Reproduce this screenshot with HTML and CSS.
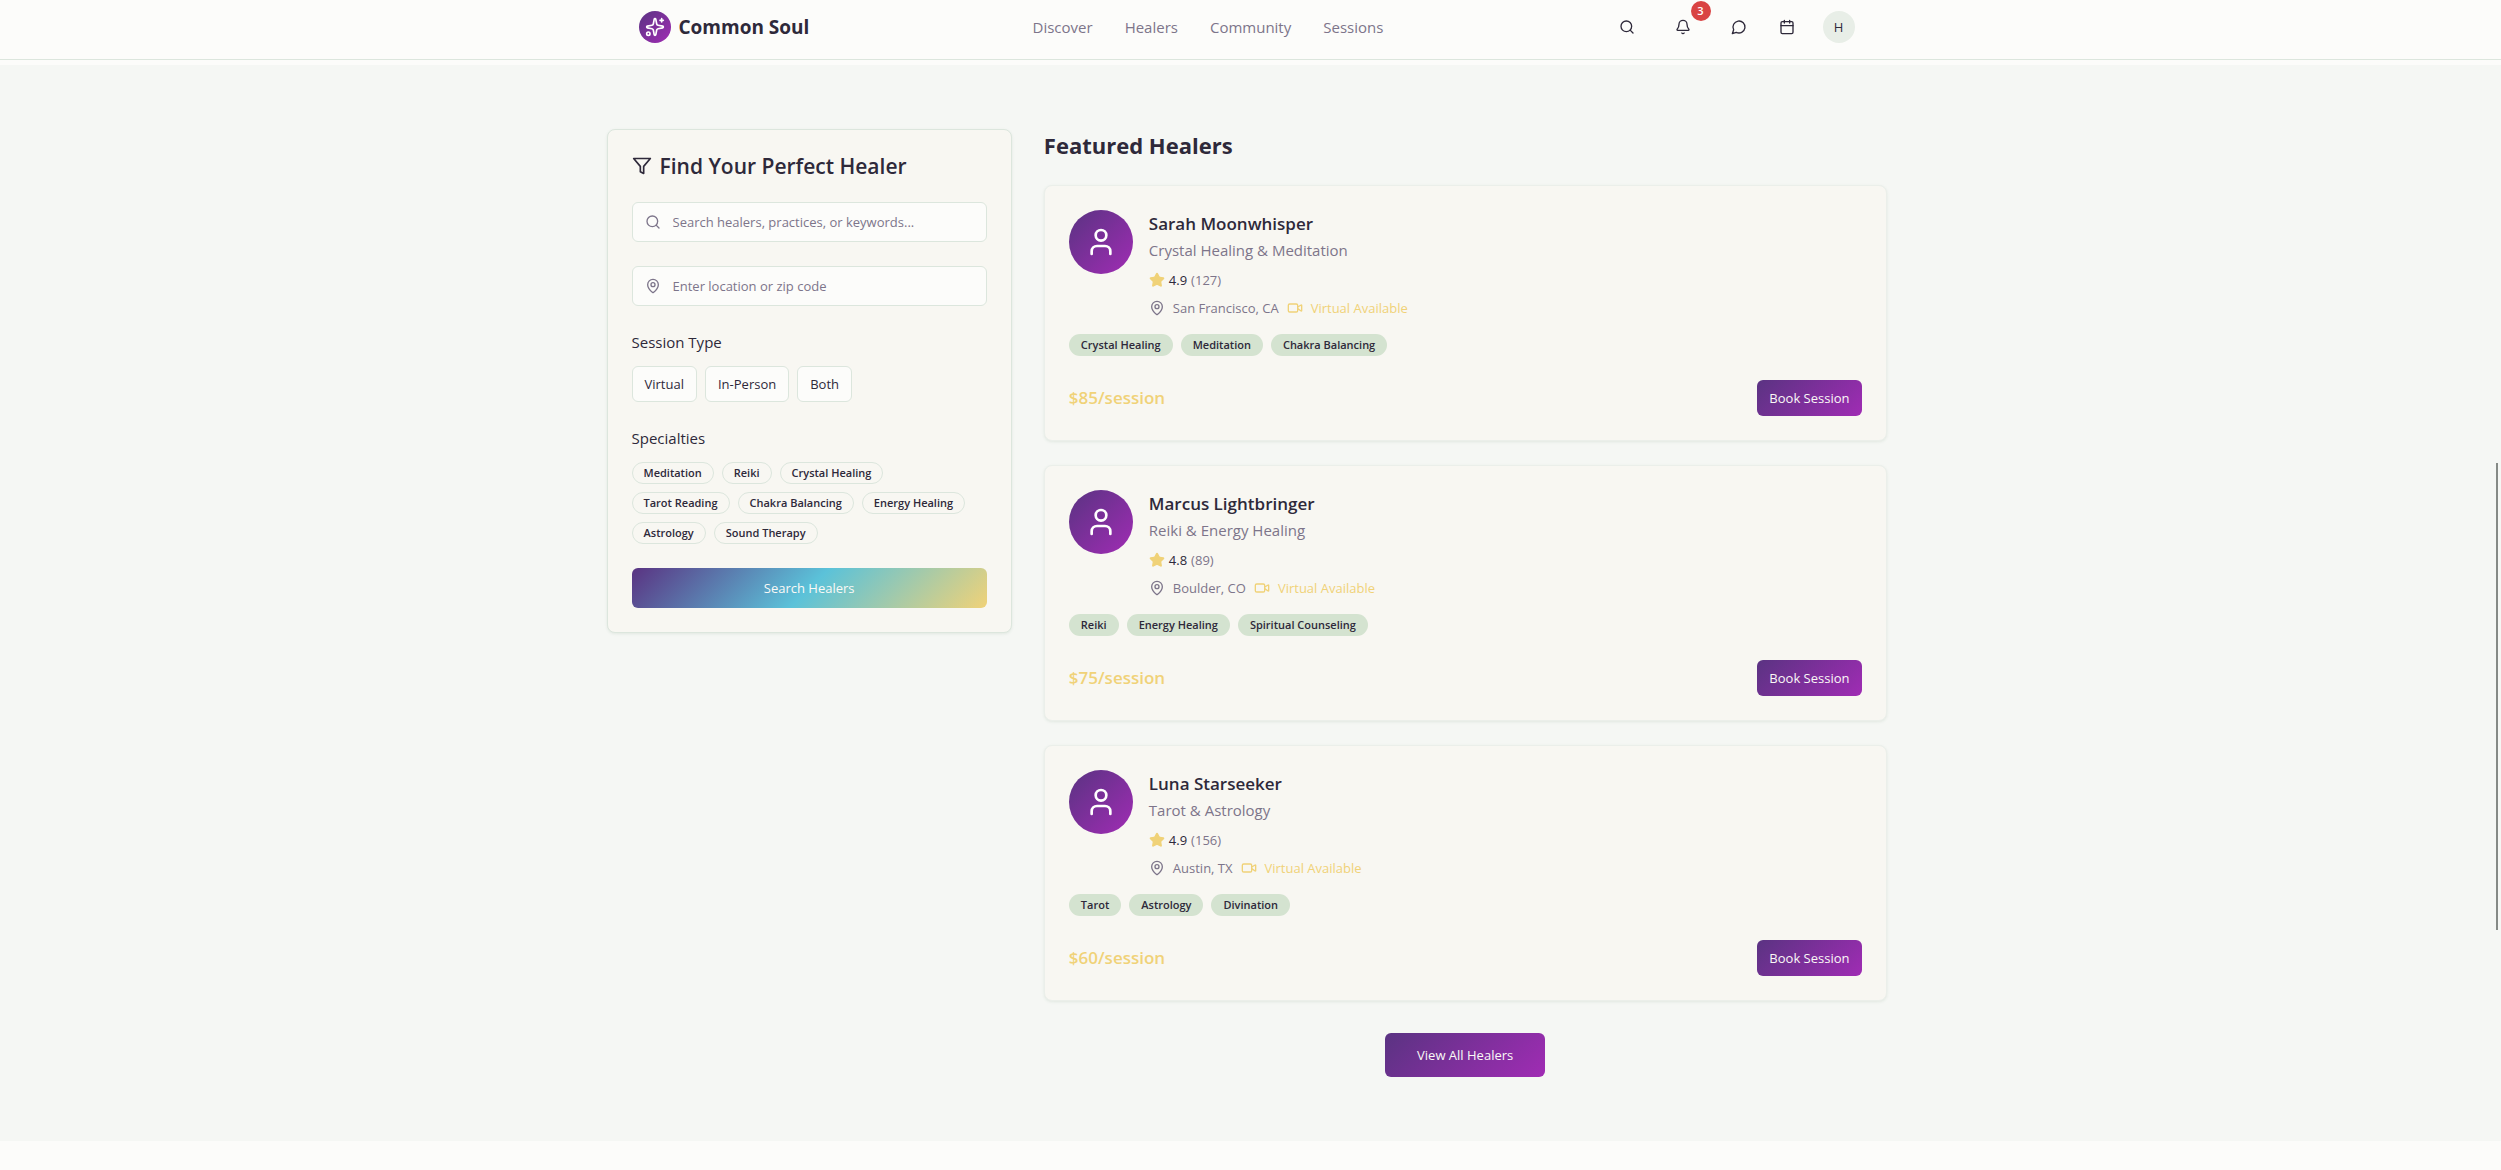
FILE: index.html
```html
<!DOCTYPE html>
<html lang="en">
<head>
<meta charset="utf-8">
<meta name="viewport" content="width=device-width, initial-scale=1">
<title>Common Soul</title>
<link rel="stylesheet" href="styles.css">
</head>
<body>
<svg class="sprite" aria-hidden="true">
  <symbol id="search" viewBox="0 0 24 24"><circle cx="11" cy="11" r="8"/><path d="m21 21-4.3-4.3"/></symbol>
  <symbol id="bell" viewBox="0 0 24 24"><path d="M10.268 21a2 2 0 0 0 3.464 0"/><path d="M3.262 15.326A1 1 0 0 0 4 17h16a1 1 0 0 0 .74-1.673C19.41 13.956 18 12.499 18 8A6 6 0 0 0 6 8c0 4.499-1.411 5.956-2.738 7.326"/></symbol>
  <symbol id="chat" viewBox="0 0 24 24"><path d="M7.9 20A9 9 0 1 0 4 16.1L2 22Z"/></symbol>
  <symbol id="calendar" viewBox="0 0 24 24"><path d="M8 2v4M16 2v4M3 10h18"/><rect x="3" y="4" width="18" height="18" rx="2"/></symbol>
  <symbol id="filter" viewBox="0 0 24 24"><path d="M22 3H2l8 9.46V19l4 2v-8.54L22 3z"/></symbol>
  <symbol id="pin" viewBox="0 0 24 24"><path d="M20 10c0 4.993-5.539 10.193-7.399 11.799a1 1 0 0 1-1.202 0C9.539 20.193 4 14.993 4 10a8 8 0 0 1 16 0"/><circle cx="12" cy="10" r="3"/></symbol>
  <symbol id="video" viewBox="0 0 24 24"><path d="m16 13 5.223 3.482a.5.5 0 0 0 .777-.416V7.87a.5.5 0 0 0-.752-.432L16 10.5"/><rect x="2" y="6" width="14" height="12" rx="2"/></symbol>
  <symbol id="user" viewBox="0 0 24 24"><path d="M19 21v-2a4 4 0 0 0-4-4H9a4 4 0 0 0-4 4v2"/><circle cx="12" cy="7" r="4"/></symbol>
  <symbol id="star" viewBox="0 0 24 24"><path d="M11.525 2.295a.53.53 0 0 1 .95 0l2.31 4.679a2.123 2.123 0 0 0 1.595 1.16l5.166.756a.53.53 0 0 1 .294.904l-3.736 3.638a2.123 2.123 0 0 0-.611 1.878l.882 5.14a.53.53 0 0 1-.771.56l-4.618-2.428a2.122 2.122 0 0 0-1.973 0L6.396 21.01a.53.53 0 0 1-.77-.56l.881-5.139a2.122 2.122 0 0 0-.611-1.879L2.16 9.795a.53.53 0 0 1 .294-.906l5.165-.755a2.122 2.122 0 0 0 1.597-1.16z"/></symbol>
  <symbol id="sparkles" viewBox="0 0 24 24"><path d="M11.017 2.814a1 1 0 0 1 1.966 0l1.051 5.558a2 2 0 0 0 1.594 1.594l5.558 1.051a1 1 0 0 1 0 1.966l-5.558 1.051a2 2 0 0 0-1.594 1.594l-1.051 5.558a1 1 0 0 1-1.966 0l-1.051-5.558a2 2 0 0 0-1.594-1.594l-5.558-1.051a1 1 0 0 1 0-1.966l5.558-1.051a2 2 0 0 0 1.594-1.594z"/><path d="M20 2v4M22 4h-4"/><circle cx="4" cy="20" r="2"/></symbol>
</svg>

<header class="site-header">
  <div class="header-inner">
    <a class="brand" href="#"><span class="brand-mark"><svg class="icon icon-mark"><use href="#sparkles"/></svg></span>Common Soul</a>
    <nav class="nav" aria-label="Main">
      <a href="#">Discover</a><a href="#">Healers</a><a href="#">Community</a><a href="#">Sessions</a>
    </nav>
    <div class="actions">
      <button class="icon-button" aria-label="Search"><svg class="icon"><use href="#search"/></svg></button>
      <button class="icon-button" aria-label="Notifications"><svg class="icon"><use href="#bell"/></svg><span class="count">3</span></button>
      <div class="action-pair">
        <button class="icon-button" aria-label="Messages"><svg class="icon"><use href="#chat"/></svg></button>
        <button class="icon-button" aria-label="Calendar"><svg class="icon"><use href="#calendar"/></svg></button>
      </div>
      <button class="profile" aria-label="Account">H</button>
    </div>
  </div>
</header>

<main class="discover">
  <div class="layout">
    <form class="panel filters">
      <h2 class="filters-title"><svg class="icon icon-filter"><use href="#filter"/></svg>Find Your Perfect Healer</h2>
      <div class="field">
        <svg class="icon"><use href="#search"/></svg>
        <input type="text" aria-label="Search healers" placeholder="Search healers, practices, or keywords...">
      </div>
      <div class="field">
        <svg class="icon"><use href="#pin"/></svg>
        <input type="text" aria-label="Location" placeholder="Enter location or zip code">
      </div>
      <section class="group">
        <h3>Session Type</h3>
        <div class="choices">
          <button type="button" class="choice">Virtual</button>
          <button type="button" class="choice">In-Person</button>
          <button type="button" class="choice">Both</button>
        </div>
      </section>
      <section class="group">
        <h3>Specialties</h3>
        <div class="choices">
          <button type="button" class="tag outline">Meditation</button>
          <button type="button" class="tag outline">Reiki</button>
          <button type="button" class="tag outline">Crystal Healing</button>
          <button type="button" class="tag outline">Tarot Reading</button>
          <button type="button" class="tag outline">Chakra Balancing</button>
          <button type="button" class="tag outline">Energy Healing</button>
          <button type="button" class="tag outline">Astrology</button>
          <button type="button" class="tag outline">Sound Therapy</button>
        </div>
      </section>
      <button type="button" class="button aurora">Search Healers</button>
    </form>

    <section class="featured">
      <h2 class="featured-title">Featured Healers</h2>
      <div class="healers">
        <article class="panel healer">
          <div class="profile-row">
            <span class="avatar"><svg class="icon icon-user"><use href="#user"/></svg></span>
            <div class="details">
              <h3>Sarah Moonwhisper</h3>
              <p class="practice">Crystal Healing &amp; Meditation</p>
              <p class="rating"><svg class="icon star"><use href="#star"/></svg><b>4.9</b><span>(127)</span></p>
              <p class="place"><svg class="icon"><use href="#pin"/></svg><span>San Francisco, CA</span><svg class="icon gold"><use href="#video"/></svg><span class="gold">Virtual Available</span></p>
            </div>
          </div>
          <div class="tags"><span class="tag">Crystal Healing</span><span class="tag">Meditation</span><span class="tag">Chakra Balancing</span></div>
          <div class="booking"><span class="price">$85/session</span><button class="button">Book Session</button></div>
        </article>
        <article class="panel healer">
          <div class="profile-row">
            <span class="avatar"><svg class="icon icon-user"><use href="#user"/></svg></span>
            <div class="details">
              <h3>Marcus Lightbringer</h3>
              <p class="practice">Reiki &amp; Energy Healing</p>
              <p class="rating"><svg class="icon star"><use href="#star"/></svg><b>4.8</b><span>(89)</span></p>
              <p class="place"><svg class="icon"><use href="#pin"/></svg><span>Boulder, CO</span><svg class="icon gold"><use href="#video"/></svg><span class="gold">Virtual Available</span></p>
            </div>
          </div>
          <div class="tags"><span class="tag">Reiki</span><span class="tag">Energy Healing</span><span class="tag">Spiritual Counseling</span></div>
          <div class="booking"><span class="price">$75/session</span><button class="button">Book Session</button></div>
        </article>
        <article class="panel healer">
          <div class="profile-row">
            <span class="avatar"><svg class="icon icon-user"><use href="#user"/></svg></span>
            <div class="details">
              <h3>Luna Starseeker</h3>
              <p class="practice">Tarot &amp; Astrology</p>
              <p class="rating"><svg class="icon star"><use href="#star"/></svg><b>4.9</b><span>(156)</span></p>
              <p class="place"><svg class="icon"><use href="#pin"/></svg><span>Austin, TX</span><svg class="icon gold"><use href="#video"/></svg><span class="gold">Virtual Available</span></p>
            </div>
          </div>
          <div class="tags"><span class="tag">Tarot</span><span class="tag">Astrology</span><span class="tag">Divination</span></div>
          <div class="booking"><span class="price">$60/session</span><button class="button">Book Session</button></div>
        </article>
      </div>
      <button class="button large">View All Healers</button>
    </section>
  </div>
</main>
<div class="scroll-thumb" aria-hidden="true"></div>
</body>
</html>
```
FILE: styles.css
```css
:root {
  --ink: #2e293a;
  --muted: #7d758a;
  --page: #fcfcfa;
  --panel: #f8f7f2;
  --line: #dce6dd;
  --gold: #f0d278;
  --mystic: linear-gradient(135deg, #5a3382, #a02cb4);
}

*, *::before, *::after { box-sizing: border-box; }

body {
  margin: 0;
  background: var(--page);
  color: var(--ink);
  font: 15px/24px "Open Sans", "Noto Sans", sans-serif;
}

h2, h3, p { margin: 0; }
a { color: inherit; text-decoration: none; }
button, input { font: inherit; color: inherit; }
button { padding: 0; border: 0; background: none; cursor: pointer; }

.sprite { display: none; }

.icon {
  flex: none;
  width: 16px;
  height: 16px;
  fill: none;
  stroke: currentColor;
  stroke-width: 2;
  stroke-linecap: round;
  stroke-linejoin: round;
}

/* Header */
.site-header {
  margin-bottom: 5px;
  padding-right: 8px;
  border-bottom: 1px solid var(--line);
}

.header-inner {
  display: flex;
  align-items: center;
  justify-content: space-between;
  max-width: 1280px;
  margin: 0 auto;
  padding: 9px 32px 14px;
}

.brand {
  display: flex;
  align-items: center;
  gap: 8px;
  font-size: 19px;
  font-weight: 700;
}

.brand-mark {
  display: grid;
  place-items: center;
  width: 32px;
  height: 32px;
  border-radius: 50%;
  background: var(--mystic);
  color: #fff;
}

.icon-mark { width: 20px; height: 20px; }

.nav { display: flex; gap: 32px; color: var(--muted); }

.actions { display: flex; align-items: center; gap: 16px; }
.action-pair { display: flex; gap: 8px; }

.icon-button {
  position: relative;
  display: grid;
  place-items: center;
  width: 40px;
  height: 36px;
}

.count {
  position: absolute;
  top: -8px;
  right: -8px;
  width: 20px;
  height: 20px;
  border-radius: 50%;
  background: #d94343;
  color: #fff;
  font-size: 11px;
  font-weight: 600;
  line-height: 20px;
}

.profile {
  width: 32px;
  height: 32px;
  border-radius: 50%;
  background: #e8eee7;
  font-size: 13px;
}

/* Page body */
.discover { padding: 64px 8px 64px 0; background: #f5f7f4; }

.layout {
  display: grid;
  grid-template-columns: repeat(3, 1fr);
  align-items: start;
  gap: 32px;
  max-width: 1280px;
  margin: 0 auto;
}

.panel {
  padding: 24px;
  border: 1px solid var(--line);
  border-radius: 8px;
  background: var(--panel);
  box-shadow: 0 1px 3px #5a82641f;
}

/* Filters */
.filters { display: flex; flex-direction: column; gap: 24px; }

.filters-title {
  display: flex;
  align-items: center;
  gap: 8px;
  font-size: 21px;
  font-weight: 600;
  line-height: 24px;
}

.icon-filter { width: 20px; height: 20px; }

.field {
  display: flex;
  align-items: center;
  gap: 12px;
  height: 40px;
  padding: 0 12px;
  border: 1px solid var(--line);
  border-radius: 6px;
  background: var(--page);
  color: var(--muted);
  font-size: 13px;
}

.field input { flex: 1; min-width: 0; padding: 0; border: 0; outline: 0; background: none; }
.field input::placeholder { color: var(--muted); opacity: 1; }

.group h3 { margin-bottom: 12px; font-size: 15px; font-weight: 400; }
.choices, .tags { display: flex; flex-wrap: wrap; gap: 8px; }

.choice {
  height: 36px;
  padding: 0 12px;
  border: 1px solid var(--line);
  border-radius: 6px;
  background: var(--page);
  font-size: 13px;
}

.tag {
  height: 22px;
  padding: 0 12px;
  border-radius: 11px;
  background: #d4e3d0;
  font-size: 11px;
  font-weight: 600;
  line-height: 22px;
}

.tag.outline { padding: 0 11px; border: 1px solid var(--line); background: none; line-height: 20px; }

.button {
  height: 36px;
  padding: 0 12px;
  border-radius: 6px;
  background: var(--mystic);
  color: #faf9f6;
  font-size: 13px;
}

.button.aurora { height: 40px; background: linear-gradient(135deg, #5a3382, #5bc2d9 50%, #f0d278); }
.button.large { height: 44px; padding: 0 32px; }

/* Featured healers */
.featured { grid-column: span 2; display: flex; flex-direction: column; }
.featured-title { margin-bottom: 24px; font-size: 22px; font-weight: 700; line-height: 32px; }
.featured .large { align-self: center; margin-top: 32px; }
.healers { display: grid; gap: 24px; }
.healer { border-color: #ebefea; }

.profile-row { display: flex; gap: 16px; margin-bottom: 16px; }

.avatar {
  display: grid;
  place-items: center;
  width: 64px;
  height: 64px;
  border-radius: 50%;
  background: var(--mystic);
  color: #fff;
}

.icon-user { width: 32px; height: 32px; }

.details h3 { font-size: 17px; font-weight: 600; line-height: 28px; }
.practice { color: var(--muted); }

.rating, .place {
  display: flex;
  align-items: center;
  margin-top: 8px;
  color: var(--muted);
  font-size: 13px;
  line-height: 20px;
}

.rating { gap: 4px; }
.rating b { color: var(--ink); font-weight: 500; }
.place { gap: 8px; }
.star { fill: var(--gold); stroke: var(--gold); }
.gold { color: var(--gold); }

.booking { display: flex; align-items: center; justify-content: space-between; margin-top: 24px; }
.price { color: var(--gold); font-size: 17px; font-weight: 600; }

/* Scroll position marker */
.scroll-thumb {
  position: fixed;
  top: 463px;
  right: 3px;
  width: 2px;
  height: 467px;
  background: #858a86;
}
```
